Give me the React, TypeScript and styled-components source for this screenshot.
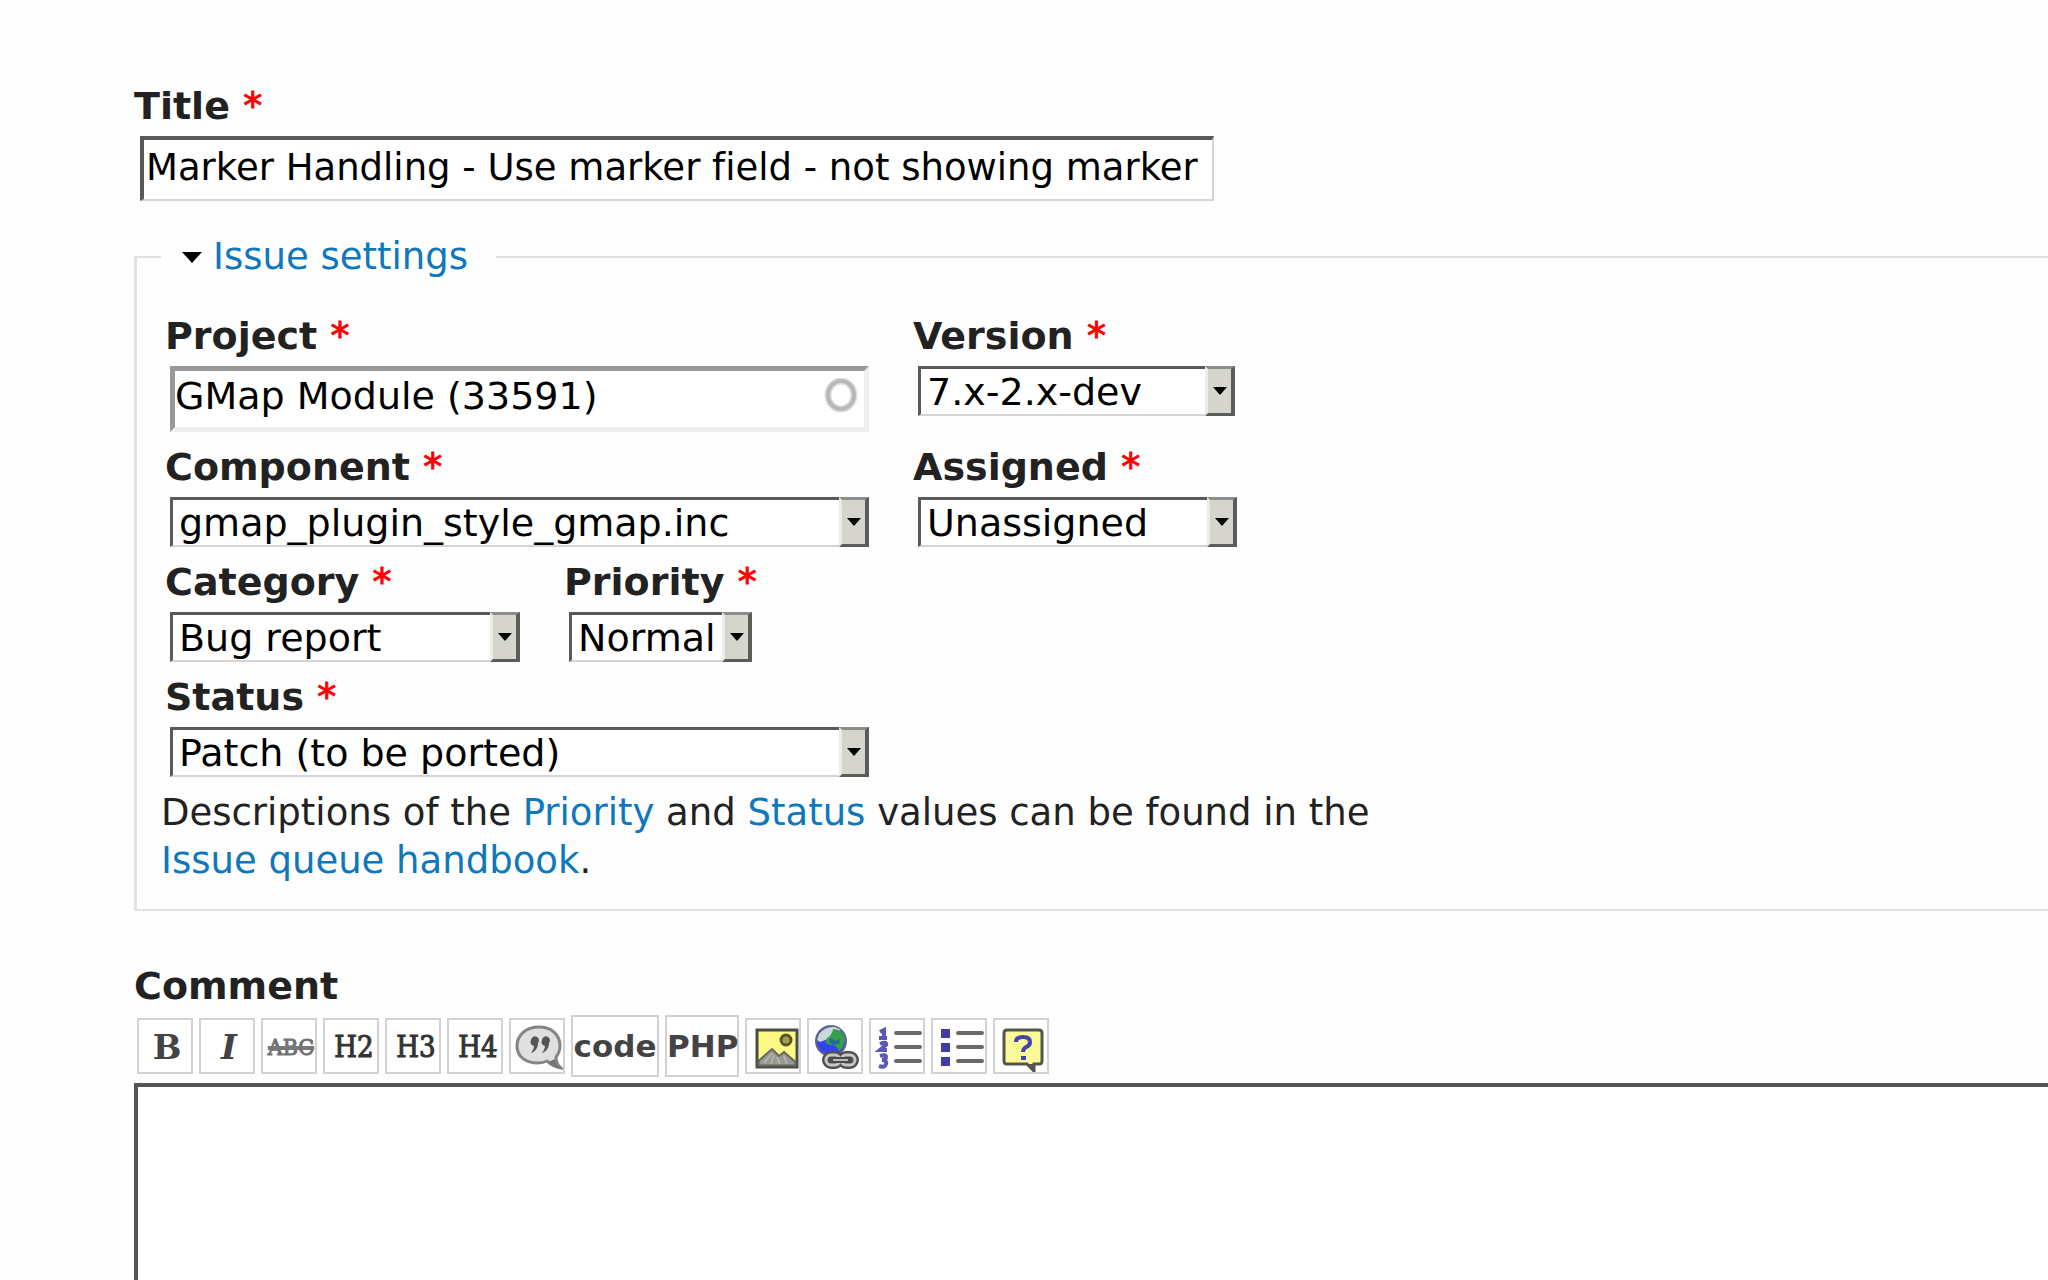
import React, { useState } from 'react';
import styled, { createGlobalStyle, css } from 'styled-components';

const GlobalStyle = createGlobalStyle`
  *, *::before, *::after { box-sizing: border-box; }
  body {
    margin: 0;
    background: #fefefe;
    color: #222;
    font-family: "DejaVu Sans", Verdana, sans-serif;
    font-size: 37px;
    line-height: 48px;
    font-variant-ligatures: none;
  }
`;

const Form = styled.form`
  display: flex;
  flex-direction: column;
  height: 100vh;
  min-height: 1200px;
  padding: 82px 0 0 134px;
  overflow: hidden;
`;

const Field = styled.div<{ $width?: number }>`
  display: flex;
  flex-direction: column;
  align-items: flex-start;
  gap: 6px;
  width: ${(p) => (p.$width ? `${p.$width}px` : 'auto')};
`;

const Label = styled.label`
  font-size: 38px;
  font-weight: bold;
  white-space: nowrap;
`;

const Required = styled.span`
  color: #f00;
  font-weight: normal;
  -webkit-text-stroke: 1px #f00;
`;

const controlText = css`
  font: inherit;
  font-variant-ligatures: none;
  line-height: 44px;
  color: #000;
  background: #fff;
  border-radius: 0;
  outline: none;
  margin: 0 0 0 6px;
`;

const TitleInput = styled.input`
  ${controlText}
  width: 1074px;
  max-width: calc(100% - 24px);
  height: 65px;
  padding: 0 0 4px 2px;
  border-style: solid;
  border-width: 4px 2px 2px 4px;
  border-color: #5a5a5c #d4d4d4 #d4d4d4 #5a5a5c;
`;

const ProjectBox = styled.div`
  display: flex;
  align-items: center;
  align-self: stretch;
  height: 66px;
  margin-left: 5px;
  padding: 0 6px 6px 0;
  background: #fff;
  border: 5px solid;
  border-color: #989898 #f0eff0 #f0eff0 #989898;
`;

const ProjectInput = styled.input`
  ${controlText}
  flex: 1;
  min-width: 0;
  margin: 0;
  padding: 0;
  border: 0;
  font-size: 38px;
`;

const SelectBox = styled.div`
  display: grid;
  align-self: stretch;
  height: 50px;
  margin-left: 5px;
`;

const StyledSelect = styled.select`
  ${controlText}
  grid-area: 1 / 1;
  appearance: none;
  width: 100%;
  height: 50px;
  margin: 0;
  padding: 0 30px 0 6px;
  border-style: solid;
  border-width: 3px 2px 2px 3px;
  border-color: #5a5a5c #d4d4d4 #d4d4d4 #5a5a5c;
  font-size: 38px;
`;

const DropButton = styled.span`
  grid-area: 1 / 1;
  justify-self: end;
  display: grid;
  place-items: center;
  width: 30px;
  background: #d5d5ce;
  border-style: solid;
  border-width: 3px 4px 3px 3px;
  border-color: #8c8c8a #5c5c5a #5c5c5a #ecece8;
  pointer-events: none;
`;

const Fieldset = styled.fieldset`
  min-width: 0;
  margin: 32px 0 0;
  padding: 31px 0 24px 24px;
  border: solid #e2e2e4;
  border-width: 2px 0 2px 3px;
`;

const Legend = styled.legend`
  padding: 0 28px 0 21px;
`;

const Toggle = styled.button`
  display: flex;
  align-items: center;
  gap: 11px;
  padding: 0;
  border: 0;
  background: none;
  font: inherit;
  color: #0f77bb;
`;

const Rows = styled.div`
  display: flex;
  flex-direction: column;
  gap: 11px;
  padding-left: 4px;
`;

const Row = styled.div`
  display: flex;
  gap: 44px;
`;

const Description = styled.p`
  max-width: 1280px;
  margin: 12px 0 0;
`;

const Link = styled.a`
  color: #0f77bb;
  text-decoration: none;
`;

const Comment = styled.section`
  display: flex;
  flex-direction: column;
  flex: 1;
  margin-top: 51px;
`;

const Toolbar = styled.div`
  display: flex;
  align-items: center;
  gap: 6px;
  margin: 5px 0 6px 3px;
`;

const ToolButton = styled.button`
  display: grid;
  place-items: center;
  width: 56px;
  height: 56px;
  padding: 0;
  border: 2px solid #d2d2d6;
  background: #fff;
  color: #444;
`;

const WordButton = styled(ToolButton)<{ $width: number }>`
  width: ${(p) => p.$width}px;
  height: 62px;
  font: bold 31px/48px "DejaVu Sans", Verdana, sans-serif;
  color: #434345;
`;

const Glyph = styled.span<{ $kind: 'bold' | 'italic' | 'strike' | 'heading' }>`
  padding-left: 4px;
  font-family: "DejaVu Serif", serif;
  font-size: 34px;
  line-height: 54px;
  ${(p) => p.$kind === 'bold' && css`font-weight: bold;`}
  ${(p) => p.$kind === 'italic' && css`font-weight: bold; font-style: italic;`}
  ${(p) => p.$kind === 'strike' && css`
    font-family: "DejaVu Serif Condensed", "DejaVu Serif", serif;
    font-size: 23px;
    color: #666;
    -webkit-text-stroke: 1px #777;
    text-decoration: line-through 4px;
  `}
  ${(p) => p.$kind === 'heading' && css`
    padding-left: 6px;
    font-family: "DejaVu Serif Condensed", "DejaVu Serif", serif;
    font-size: 29px;
    color: #333;
    -webkit-text-stroke: 1px #333;
  `}
`;

const TextArea = styled.textarea`
  flex: 1;
  width: 100%;
  padding: 8px;
  border: solid #555557;
  border-width: 4px 0 0 4px;
  background: #fff;
  font: inherit;
  resize: none;
  outline: none;
`;

const Throbber = () => (
  <svg width="34" height="36" viewBox="0 0 34 36" aria-hidden="true">
    <ellipse cx="17" cy="17" rx="13" ry="14" fill="none" stroke="#dedede" strokeWidth="7" />
    <ellipse cx="17" cy="17" rx="13" ry="14" fill="none" stroke="#b8b8b8" strokeWidth="4" />
  </svg>
);

const QuoteIcon = () => (
  <svg width="52" height="52" viewBox="0 0 52 52" aria-hidden="true">
    <path d="M28 7C15 7 6 15 6 26S15 43 27 43q5 0 9-2 6 6 14 7-5-4-5-11 4-5 4-11C49 15 41 7 28 7Z" fill="#e0e0e2" stroke="#858588" strokeWidth="3" />
    <path d="M37 42q6 6 13 6-6-4-6-9" fill="#77777a" />
    <path d="M20 20a4 4 0 1 1 7 3c0 5-3 9-7 10 2-3 3-5 3-7a4 4 0 0 1-3-6ZM31 20a4 4 0 1 1 7 3c0 5-3 9-7 10 2-3 3-5 3-7a4 4 0 0 1-3-6Z" fill="#555" />
  </svg>
);

const ImageIcon = () => (
  <svg width="52" height="52" viewBox="0 0 52 52" aria-hidden="true">
    <rect x="10" y="10" width="40" height="37" fill="#fbfb84" stroke="#4c4c48" strokeWidth="3" />
    <circle cx="39" cy="20" r="5" fill="#a0a050" stroke="#555530" strokeWidth="3" />
    <path d="M11.500 45.500V41L25 29l7 7 5-4 11.500 10v3.500Z" fill="#999993" stroke="#66665f" strokeWidth="2" />
    <path d="m17 43 8-10M24 44l3-9M33 44l-3-7M40 44l-3-8" stroke="#b4b4ae" strokeWidth="2" />
  </svg>
);

const GlobeIcon = () => (
  <svg width="52" height="52" viewBox="0 0 52 52" aria-hidden="true">
    <circle cx="22" cy="21" r="15" fill="#3344ee" stroke="#666688" strokeWidth="2" />
    <path d="M10 14q6-8 16-7l6 3-9 3-4 6-8 3-3-2Z" fill="#c9d8d8" />
    <path d="M24 9q10 0 12 10-1 8-6 12-3-7-8-6-8-1-4-7 5-2 6-9Z" fill="#35a048" />
    <path d="M21 18l6 3 4-2-1 5-6 1-4-3Z" fill="#226b9a" />
    <g fill="none" stroke="#505050" strokeWidth="8">
      <rect x="17" y="35" width="14" height="10" rx="5" />
      <rect x="32" y="35" width="14" height="10" rx="5" />
    </g>
    <g fill="none" stroke="#c8c8c4" strokeWidth="3">
      <rect x="17" y="35" width="14" height="10" rx="5" />
      <rect x="32" y="35" width="14" height="10" rx="5" />
    </g>
    <path d="M21 40h21" stroke="#4a4a4a" strokeWidth="6" />
    <path d="M24 40h15" stroke="#bbb" strokeWidth="2" />
  </svg>
);

const Lines = () => (
  <path d="M25 13h24M25 27h24M25 41h24" stroke="#6a6a6c" strokeWidth="4" strokeLinecap="round" />
);

const NumberListIcon = () => (
  <svg width="52" height="52" viewBox="0 0 52 52" aria-hidden="true">
    <Lines />
    <path d="m9 12 4-2v8M8 18h8M9 24q7-3 6 1l-6 5h7M9 36q6-2 6 1t-4 3q5 0 4 4t-7 2" fill="none" stroke="#5a57bb" strokeWidth="4" />
  </svg>
);

const BulletListIcon = () => (
  <svg width="52" height="52" viewBox="0 0 52 52" aria-hidden="true">
    <Lines />
    <path d="M8 9h9v9H8ZM8 23h9v9H8ZM8 37h9v9H8Z" fill="#403ca8" />
  </svg>
);

const HelpIcon = () => (
  <svg width="52" height="52" viewBox="0 0 52 52" aria-hidden="true">
    <path d="M12 10h32q3 0 3 3v28q0 3-3 3h-5v7l-7-7H12q-3 0-3-3V13q0-3 3-3Z" fill="#fafa98" stroke="#55554f" strokeWidth="3" />
    <path d="M32 44h7v7Z" fill="#55554f" />
    <path d="M21 22q0-5 7-5t7 5q0 4-4 5-3 2-3 5" fill="none" stroke="#4543a5" strokeWidth="4" />
    <path d="M26 36h5v4h-5Z" fill="#4543a5" />
  </svg>
);

const Mark = () => <Required>*</Required>;

type SelectProps = { id: string; label: string; width: number; options: string[] };

const SelectField = ({ id, label, width, options }: SelectProps) => (
  <Field $width={width}>
    <Label htmlFor={id}>{label} <Mark /></Label>
    <SelectBox>
      <StyledSelect id={id} defaultValue={options[0]}>
        {options.map((o) => <option key={o}>{o}</option>)}
      </StyledSelect>
      <DropButton>
        <svg width="14" height="8" viewBox="0 0 14 8" aria-hidden="true"><path d="M0 0h14L7 8Z" /></svg>
      </DropButton>
    </SelectBox>
  </Field>
);

export default function App() {
  const [open, setOpen] = useState(true);
  return (
    <>
      <GlobalStyle />
      <Form onSubmit={(e) => e.preventDefault()}>
        <Field>
          <Label htmlFor="title">Title <Mark /></Label>
          <TitleInput id="title" defaultValue="Marker Handling - Use marker field - not showing marker" />
        </Field>

        <Fieldset>
          <Legend>
            <Toggle type="button" aria-expanded={open} onClick={() => setOpen(!open)}>
              <svg width="20" height="12" viewBox="0 0 20 12" aria-hidden="true"><path d="M0 1h20L10 12Z" fill="#000" /></svg>
              Issue settings
            </Toggle>
          </Legend>
          {open && (
            <>
              <Rows>
                <Row>
                  <Field $width={704}>
                    <Label htmlFor="project">Project <Mark /></Label>
                    <ProjectBox>
                      <ProjectInput id="project" defaultValue="GMap Module (33591)" />
                      <Throbber />
                    </ProjectBox>
                  </Field>
                  <SelectField id="version" label="Version" width={322} options={['7.x-2.x-dev']} />
                </Row>
                <Row>
                  <SelectField id="component" label="Component" width={704} options={['gmap_plugin_style_gmap.inc']} />
                  <SelectField id="assigned" label="Assigned" width={324} options={['Unassigned']} />
                </Row>
                <Row>
                  <SelectField id="category" label="Category" width={355} options={['Bug report']} />
                  <SelectField id="priority" label="Priority" width={188} options={['Normal']} />
                </Row>
                <Row>
                  <SelectField id="status" label="Status" width={704} options={['Patch (to be ported)']} />
                </Row>
              </Rows>
              <Description>
                Descriptions of the <Link href="#priority">Priority</Link> and{' '}
                <Link href="#status">Status</Link> values can be found in the{' '}
                <Link href="#handbook">Issue queue handbook</Link>.
              </Description>
            </>
          )}
        </Fieldset>

        <Comment>
          <Label htmlFor="comment">Comment</Label>
          <Toolbar role="toolbar" aria-label="Formatting">
            <ToolButton type="button"><Glyph $kind="bold">B</Glyph></ToolButton>
            <ToolButton type="button"><Glyph $kind="italic">I</Glyph></ToolButton>
            <ToolButton type="button"><Glyph $kind="strike">ABC</Glyph></ToolButton>
            <ToolButton type="button"><Glyph $kind="heading">H2</Glyph></ToolButton>
            <ToolButton type="button"><Glyph $kind="heading">H3</Glyph></ToolButton>
            <ToolButton type="button"><Glyph $kind="heading">H4</Glyph></ToolButton>
            <ToolButton type="button" aria-label="Quote"><QuoteIcon /></ToolButton>
            <WordButton type="button" $width={88}>code</WordButton>
            <WordButton type="button" $width={74}>PHP</WordButton>
            <ToolButton type="button" aria-label="Image"><ImageIcon /></ToolButton>
            <ToolButton type="button" aria-label="Link"><GlobeIcon /></ToolButton>
            <ToolButton type="button" aria-label="Numbered list"><NumberListIcon /></ToolButton>
            <ToolButton type="button" aria-label="Bulleted list"><BulletListIcon /></ToolButton>
            <ToolButton type="button" aria-label="Help"><HelpIcon /></ToolButton>
          </Toolbar>
          <TextArea id="comment" />
        </Comment>
      </Form>
    </>
  );
}
